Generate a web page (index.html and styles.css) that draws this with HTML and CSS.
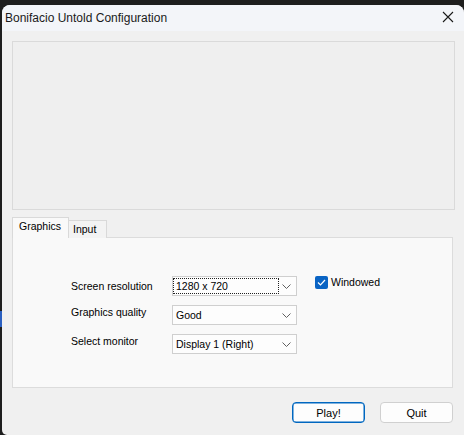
FILE: index.html
```html
<!DOCTYPE html>
<html>
<head>
<meta charset="utf-8">
<link rel="stylesheet" href="styles.css">
</head>
<body>
<div class="window">
  <div class="titlebar">
    <span class="title">Bonifacio Untold Configuration</span>
    <svg class="close" width="12" height="12" viewBox="0 0 12 12"><path d="M1 1 L11 11 M11 1 L1 11" stroke="#1a1a1a" stroke-width="1.1" fill="none"/></svg>
  </div>
  <div class="content">
    <div class="picture"></div>
    <div class="tabs">
      <div class="tab tab-active">Graphics</div>
      <div class="tab tab-input">Input</div>
    </div>
    <div class="panel">
      <div class="form">
        <div class="label label-first">Screen resolution</div>
        <div class="combo"><span class="combo-text focused">1280 x 720</span><svg class="chev" width="9" height="5" viewBox="0 0 9 5"><path d="M0.5 0.5 L4.5 4.5 L8.5 0.5" stroke="#606060" stroke-width="1" fill="none"/></svg></div>
        <label class="check"><span class="box"><svg width="9" height="7" viewBox="0 0 9 7"><path d="M1 3.5 L3.5 6 L8 1" stroke="#fff" stroke-width="1.2" fill="none"/></svg></span>Windowed</label>
        <div class="label">Graphics quality</div>
        <div class="combo"><span class="combo-text">Good</span><svg class="chev" width="9" height="5" viewBox="0 0 9 5"><path d="M0.5 0.5 L4.5 4.5 L8.5 0.5" stroke="#606060" stroke-width="1" fill="none"/></svg></div>
        <div></div>
        <div class="label">Select monitor</div>
        <div class="combo"><span class="combo-text">Display 1 (Right)</span><svg class="chev" width="9" height="5" viewBox="0 0 9 5"><path d="M0.5 0.5 L4.5 4.5 L8.5 0.5" stroke="#606060" stroke-width="1" fill="none"/></svg></div>
        <div></div>
      </div>
    </div>
    <div class="buttons">
      <button class="btn btn-default">Play!</button>
      <button class="btn">Quit</button>
    </div>
  </div>
</div>
</body>
</html>
```
FILE: styles.css
```css
html, body {
  margin: 0;
  padding: 0;
}
body {
  width: 464px;
  height: 435px;
  overflow: hidden;
  background: linear-gradient(to bottom, #1e1e1e 0, #1e1e1e 311px, #2a5fc0 311px, #2a5fc0 327px, #1e1e1e 327px);
  font-family: "Liberation Sans", Arial, sans-serif;
  font-size: 10.5px;
  color: #000;
}
.window {
  margin: 5px 0 0 2px;
  width: 462px;
  height: 430px;
  background: #f0f0f0;
  border-radius: 8px 8px 0 5px;
  overflow: hidden;
}
.titlebar {
  height: 26px;
  background: #f3f5f9;
  display: flex;
  align-items: center;
  justify-content: space-between;
  padding: 0 10px 0 3px;
}
.title {
  font-size: 12px;
  color: #1a1a1a;
  margin-top: -1px;
}
.close {
  display: block;
  margin-top: -2px;
}
.content {
  padding: 10px 9px 0 10px;
}
.picture {
  height: 167px;
  border: 1px solid #dadada;
  background: #efefef;
}
.tabs {
  display: flex;
  align-items: flex-end;
  margin-top: 7px;
  position: relative;
  z-index: 1;
  margin-bottom: -1px;
}
.tab {
  box-sizing: border-box;
  height: 18px;
  border: 1px solid #d9d9d9;
  border-bottom: none;
  border-left: none;
  background: #f3f3f3;
  padding: 2px 7px 0 4px;
  line-height: 13px;
}
.tab-input {
  width: 38px;
}
.tab-active {
  height: 21px;
  border-left: 1px solid #d9d9d9;
  border-right: 1px solid #d9d9d9;
  background: #f9f9f9;
  padding: 2px 6px 0 6px;
  width: 57px;
}
.panel {
  box-sizing: border-box;
  width: 441px;
  height: 151px;
  border: 1px solid #dcdcdc;
  background: #f9f9f9;
  padding: 38px 0 0 58px;
}
.form {
  display: grid;
  grid-template-columns: 101px 125px auto;
  grid-template-rows: 20px 20px 20px;
  row-gap: 9px;
}
.label {
  padding-top: 1px;
  line-height: 13px;
}
.label-first {
  padding-top: 4px;
}
.combo {
  box-sizing: border-box;
  border: 1px solid #cfcfcf;
  background: #fdfdfd;
  display: flex;
  align-items: center;
  justify-content: space-between;
  padding: 0 5px 0 1px;
}
.combo-text {
  padding: 1px 2px;
  line-height: 12px;
}
.focused {
  outline: 1px dotted #222;
  outline-offset: 0;
  width: 100px;
}
.chev {
  display: block;
}
.check {
  display: flex;
  align-items: flex-start;
  margin-left: 18px;
  line-height: 13px;
}
.box {
  width: 13px;
  height: 13px;
  border-radius: 2px;
  background: #0a64c4;
  display: flex;
  align-items: center;
  justify-content: center;
  margin-right: 3px;
}
.box svg {
  display: block;
}
.buttons {
  display: flex;
  justify-content: flex-end;
  gap: 15px;
  margin: 14px 2px 0 0;
}
.btn {
  box-sizing: border-box;
  width: 73px;
  height: 21px;
  border: 1px solid #d0d0d0;
  border-radius: 4px;
  background: #fdfdfd;
  font-family: "Liberation Sans", Arial, sans-serif;
  font-size: 11px;
  color: #000;
  padding: 0;
}
.btn-default {
  border: 1px solid #0067c0;
  box-shadow: inset 0 0 0 0.5px #0067c0;
}
```
